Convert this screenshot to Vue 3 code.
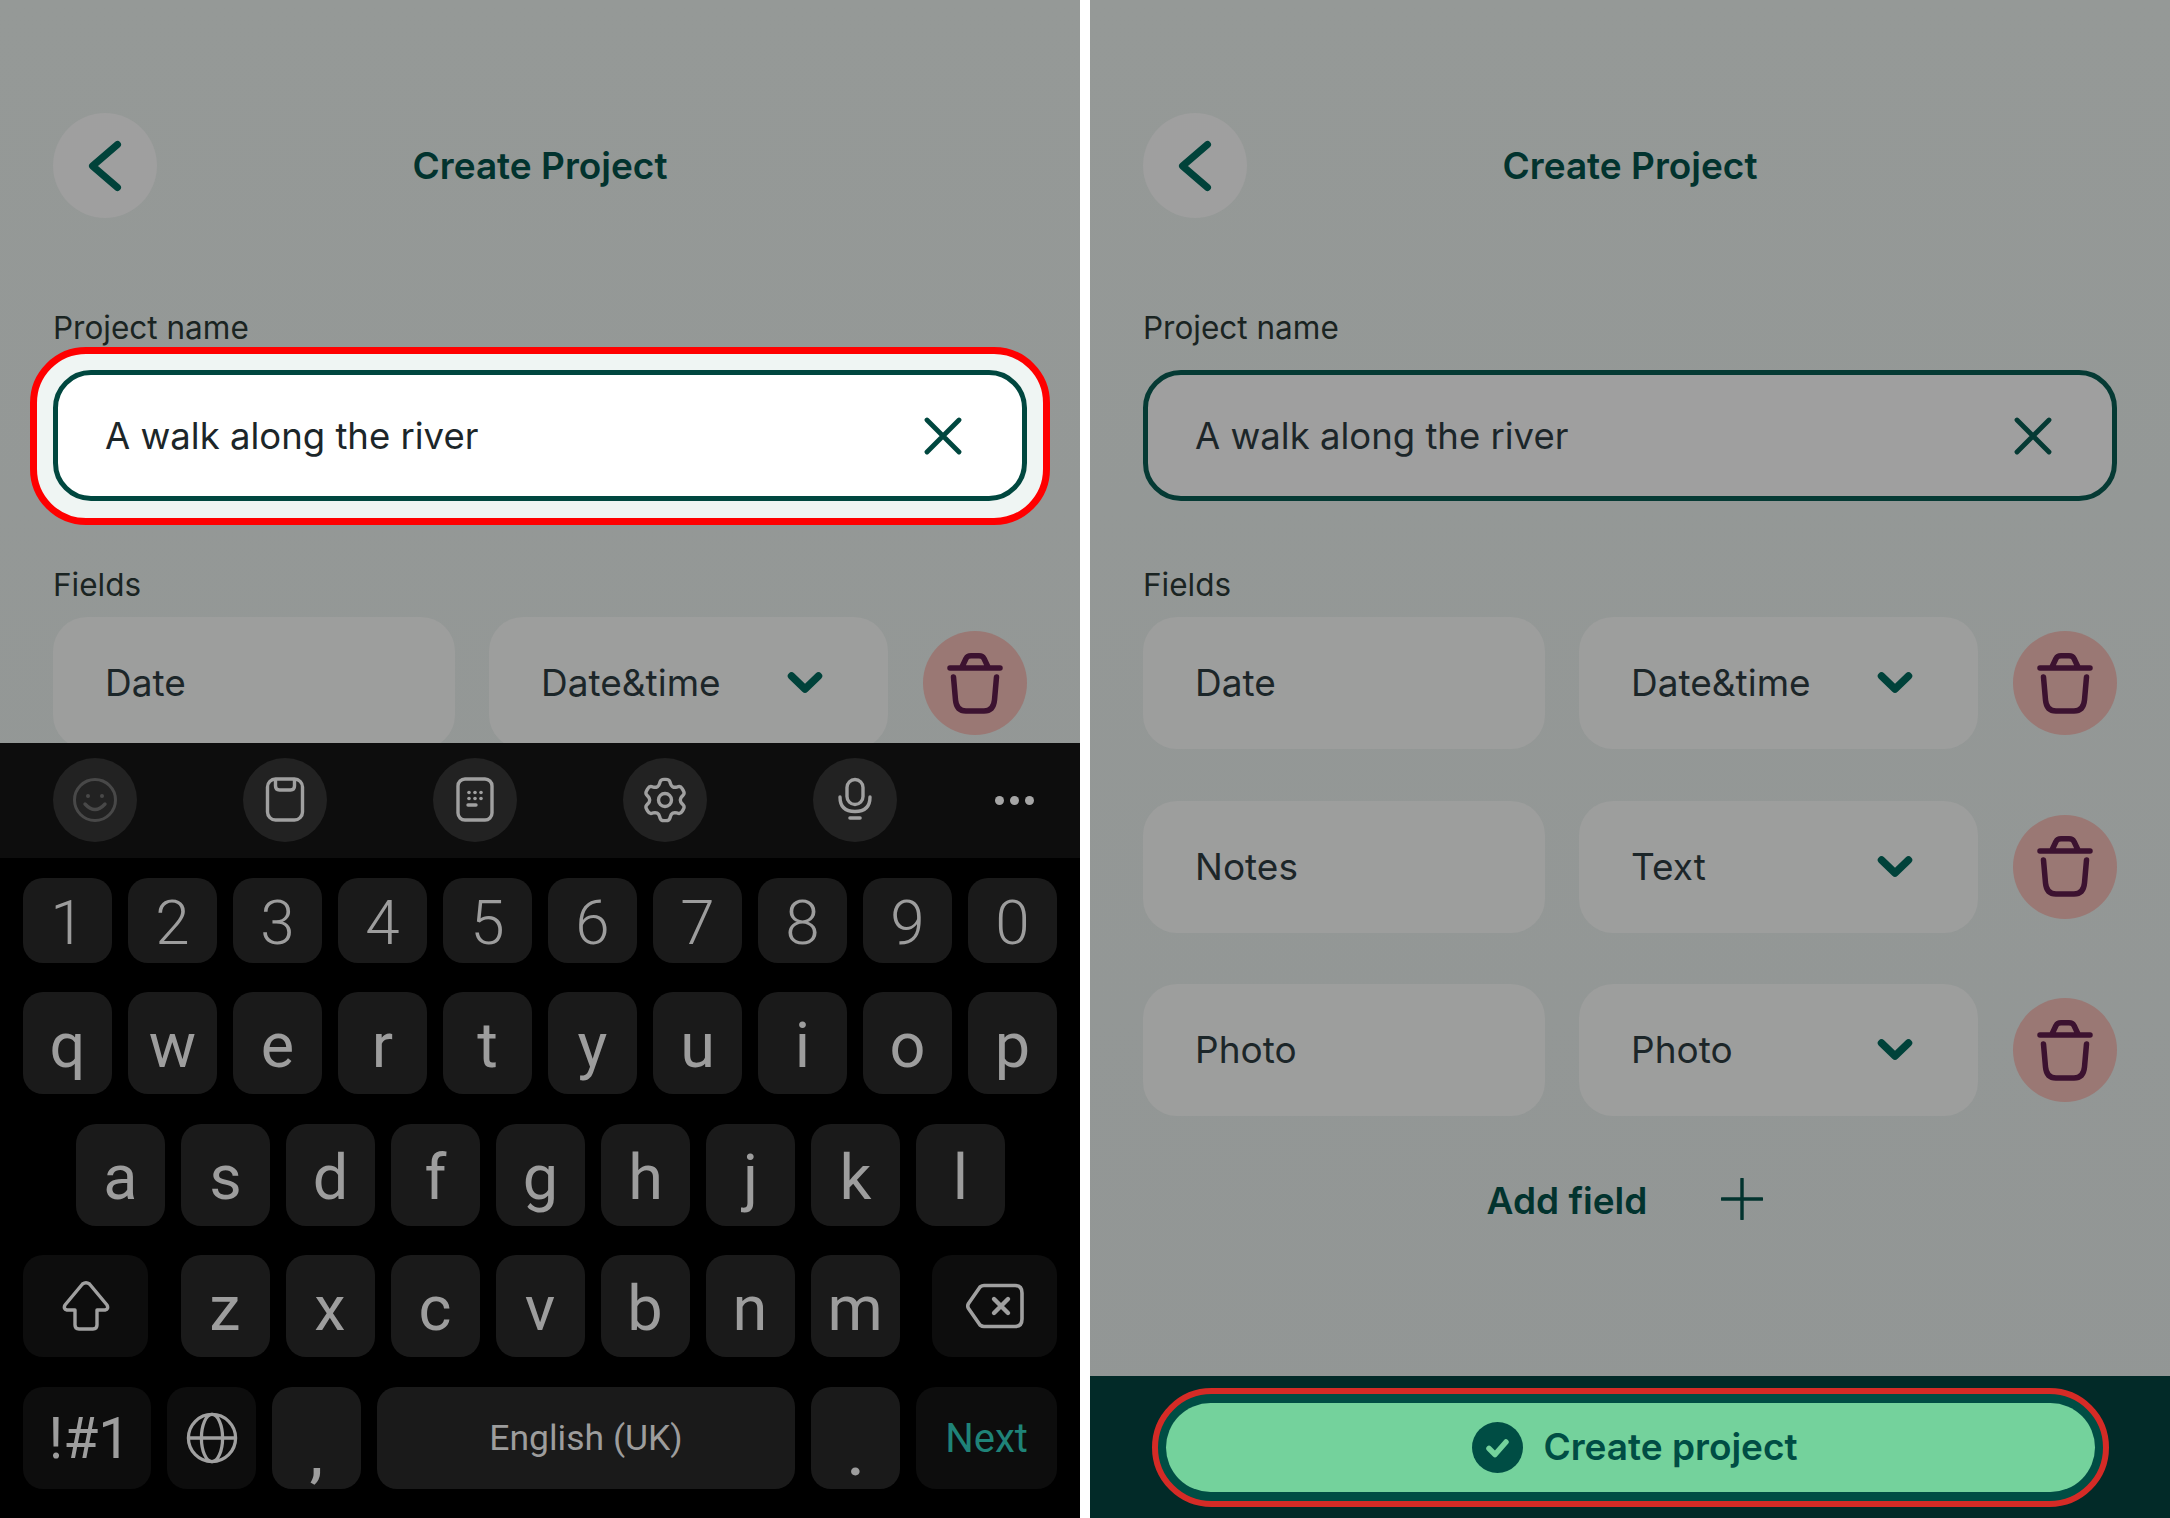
<script setup>
const fieldRows = [
  { name: 'Date', type: 'Date&time' },
  { name: 'Notes', type: 'Text' },
  { name: 'Photo', type: 'Photo' }
]
const digits = '1234567890'.split('')
const row1 = 'qwertyuiop'.split('')
const row2 = 'asdfghjkl'.split('')
const row3 = 'zxcvbnm'.split('')

// six-toothed gear outline with softened corners
function gearPath() {
  const cx = 22, cy = 24, pts = []
  for (let i = 0; i < 6; i++) {
    const a = -Math.PI / 2 + (i * Math.PI) / 3
    const add = (off, r) => pts.push([cx + r * Math.cos(a + off), cy + r * Math.sin(a + off)])
    add(-0.4, 15.5)
    add(-0.2, 21)
    add(0.2, 21)
    add(0.4, 15.5)
  }
  let d = ''
  pts.forEach((p, i) => {
    const prev = pts[(i + pts.length - 1) % pts.length]
    const next = pts[(i + 1) % pts.length]
    const t = 0.38
    const a = [p[0] + (prev[0] - p[0]) * t, p[1] + (prev[1] - p[1]) * t]
    const b = [p[0] + (next[0] - p[0]) * t, p[1] + (next[1] - p[1]) * t]
    d += `${i ? 'L' : 'M'}${a[0].toFixed(2)} ${a[1].toFixed(2)} Q${p[0].toFixed(2)} ${p[1].toFixed(2)} ${b[0].toFixed(2)} ${b[1].toFixed(2)} `
  })
  return d + 'Z'
}
const gear = gearPath()
</script>

<template>
  <div class="page">
    <!-- LEFT PANEL -->
    <section class="panel">
      <header class="head">
        <button class="back">
          <svg viewBox="0 0 104 105" width="104" height="105"><path d="M64.500 31.500 L39.500 53 L64.500 74.500" fill="none" stroke="#00423a" stroke-width="7" stroke-linecap="round" stroke-linejoin="round"/></svg>
        </button>
        <h1 class="title">Create Project</h1>
      </header>
      <label class="lbl first">Project name</label>
      <div class="focus-ring">
        <div class="input white">
          <span>A walk along the river</span>
          <svg class="x" viewBox="0 0 38 38" width="38" height="38"><path d="M3 3 L35 35 M35 3 L3 35" fill="none" stroke="#00473f" stroke-width="4.800" stroke-linecap="round"/></svg>
        </div>
      </div>
      <label class="lbl second-l">Fields</label>
      <div class="clip">
        <div class="frow">
          <div class="fbox name"><span>Date</span></div>
          <div class="fbox type"><span>Date&amp;time</span>
            <svg class="chev" viewBox="0 0 36 24" width="36" height="24"><path d="M4.500 5 L18 18 L31.500 5" fill="none" stroke="#00423a" stroke-width="7.500" stroke-linecap="round" stroke-linejoin="round"/></svg>
          </div>
          <div class="trash">
            <svg viewBox="0 0 56 61" width="56" height="61"><path d="M3 15 H53 M15 14 L19 5.500 Q20.500 2.800 24 2.800 H32 Q35.500 2.800 37 5.500 L41 14 M6.500 24 L8.500 47 Q9.500 58 19 58 H37 Q46.500 58 47.500 47 L49.500 24" fill="none" stroke="#3c1230" stroke-width="5.500" stroke-linecap="round" stroke-linejoin="round"/></svg>
          </div>
        </div>
      </div>

      <div class="kb">
        <div class="tools">
          <span class="tool">
            <svg viewBox="0 0 44 44" width="44" height="44" fill="none" stroke="#484848" stroke-width="3"><circle cx="22" cy="22" r="20.500"/><circle cx="15" cy="18" r="2" fill="#484848" stroke="none"/><circle cx="29" cy="18" r="2" fill="#484848" stroke="none"/><path d="M12 26 Q22 37 32 26" stroke-width="3.400" stroke-linecap="round"/></svg>
          </span>
          <span class="tool">
            <svg viewBox="0 0 44 48" width="44" height="48" fill="none" stroke="#a0a0a0" stroke-width="3.400"><rect x="4.500" y="3" width="35" height="41" rx="8"/><path d="M12.500 3 V10 Q12.500 14 16.500 14 H27.500 Q31.500 14 31.500 10 V3"/></svg>
          </span>
          <span class="tool">
            <svg viewBox="0 0 44 48" width="44" height="48" fill="none" stroke="#a0a0a0" stroke-width="3.400"><rect x="5" y="3" width="34" height="41" rx="7"/><g fill="#a0a0a0" stroke="none"><circle cx="16" cy="16.500" r="1.800"/><circle cx="22" cy="16.500" r="1.800"/><circle cx="28" cy="16.500" r="1.800"/><circle cx="16" cy="22.500" r="1.800"/><circle cx="22" cy="22.500" r="1.800"/><circle cx="28" cy="22.500" r="1.800"/></g><path d="M15 29 H23" stroke-width="3.400" stroke-linecap="round"/></svg>
          </span>
          <span class="tool">
            <svg viewBox="0 0 44 48" width="44" height="48" fill="none" stroke="#a0a0a0" stroke-width="3.400" stroke-linejoin="round"><path :d="gear"/><circle cx="22" cy="24" r="6.500"/></svg>
          </span>
          <span class="tool">
            <svg viewBox="0 0 36 48" width="36" height="48" fill="none" stroke="#a0a0a0" stroke-width="3.400" stroke-linecap="round"><rect x="10" y="3.500" width="16" height="25" rx="8"/><path d="M3 21 Q3 35.500 18 35.500 Q33 35.500 33 21"/><path d="M13 42 H23" stroke-width="3.600"/></svg>
          </span>
          <span class="more"><i></i><i></i><i></i></span>
        </div>
        <div class="keys">
          <div class="krow num"><span v-for="k in digits" :key="k" class="key">{{ k }}</span></div>
          <div class="krow tall"><span v-for="k in row1" :key="k" class="key">{{ k }}</span></div>
          <div class="krow tall inset"><span v-for="k in row2" :key="k" class="key">{{ k }}</span></div>
          <div class="krow tall spread">
            <span class="key fn shift">
              <svg viewBox="0 0 50 52" width="50" height="52" fill="none" stroke="#a0a0a0" stroke-width="3.400" stroke-linejoin="round"><path d="M21.500 4 Q25 1.500 28.500 4 L46 25 Q48 29 44 30 H36 V45 Q36 49 32 49 H18 Q14 49 14 45 V30 H6 Q2 29 4 25 Z"/></svg>
            </span>
            <div class="mid"><span v-for="k in row3" :key="k" class="key">{{ k }}</span></div>
            <span class="key fn shift">
              <svg viewBox="0 0 60 46" width="60" height="46" fill="none" stroke="#a0a0a0" stroke-width="3.600" stroke-linejoin="round"><path d="M15 4 Q17 2.500 19 2.500 H50 Q57 2.500 57 10 V36 Q57 43.500 50 43.500 H19 Q17 43.500 15 42 L3.500 25.500 Q2 23 3.500 20.500 Z"/><path d="M29 16 L43 30 M43 16 L29 30" stroke-width="4.400" stroke-linecap="round"/></svg>
            </span>
          </div>
          <div class="krow tall bottom">
            <span class="key fn sym">!#1</span>
            <span class="key fn globe">
              <svg viewBox="0 0 54 54" width="52" height="52" fill="none" stroke="#a0a0a0" stroke-width="3.400"><circle cx="27" cy="27" r="24.500"/><ellipse cx="27" cy="27" rx="11" ry="24.500"/><path d="M3 27 H51"/></svg>
            </span>
            <span class="key low">,</span>
            <span class="key space">English (UK)</span>
            <span class="key low">.</span>
            <span class="key fn next">Next</span>
          </div>
        </div>
      </div>
    </section>

    <!-- RIGHT PANEL -->
    <section class="panel">
      <header class="head">
        <button class="back">
          <svg viewBox="0 0 104 105" width="104" height="105"><path d="M64.500 31.500 L39.500 53 L64.500 74.500" fill="none" stroke="#00423a" stroke-width="7" stroke-linecap="round" stroke-linejoin="round"/></svg>
        </button>
        <h1 class="title">Create Project</h1>
      </header>
      <label class="lbl first">Project name</label>
      <div class="no-ring">
        <div class="input">
          <span>A walk along the river</span>
          <svg class="x" viewBox="0 0 38 38" width="38" height="38"><path d="M3 3 L35 35 M35 3 L3 35" fill="none" stroke="#053a34" stroke-width="4.800" stroke-linecap="round"/></svg>
        </div>
      </div>
      <label class="lbl second-r">Fields</label>
      <div class="rows">
        <div v-for="r in fieldRows" :key="r.name" class="frow">
          <div class="fbox name"><span>{{ r.name }}</span></div>
          <div class="fbox type"><span>{{ r.type }}</span>
            <svg class="chev" viewBox="0 0 36 24" width="36" height="24"><path d="M4.500 5 L18 18 L31.500 5" fill="none" stroke="#00423a" stroke-width="7.500" stroke-linecap="round" stroke-linejoin="round"/></svg>
          </div>
          <div class="trash">
            <svg viewBox="0 0 56 61" width="56" height="61"><path d="M3 15 H53 M15 14 L19 5.500 Q20.500 2.800 24 2.800 H32 Q35.500 2.800 37 5.500 L41 14 M6.500 24 L8.500 47 Q9.500 58 19 58 H37 Q46.500 58 47.500 47 L49.500 24" fill="none" stroke="#3c1230" stroke-width="5.500" stroke-linecap="round" stroke-linejoin="round"/></svg>
          </div>
        </div>
      </div>
      <div class="add">
        <span>Add field</span>
        <svg viewBox="0 0 44 44" width="42" height="42"><path d="M22 1 V43 M1 22 H43" fill="none" stroke="#02332e" stroke-width="3.600" stroke-linecap="round"/></svg>
      </div>
      <footer class="foot">
        <div class="cta-ring">
          <button class="cta">
            <svg viewBox="0 0 51 51" width="51" height="51"><circle cx="25.500" cy="25.500" r="25.500" fill="#004d44"/><path d="M17 26.500 L23 32.500 L34 20" fill="none" stroke="#74d29c" stroke-width="5.500" stroke-linecap="round" stroke-linejoin="round"/></svg>
            <span>Create project</span>
          </button>
        </div>
      </footer>
    </section>
  </div>
</template>

<style>
html, body { margin: 0; background: #fff; }
</style>

<style scoped>
.page {
  display: flex;
  gap: 10px;
  width: 2170px;
  height: 1518px;
  overflow: hidden;
  font-family: Inter, "Liberation Sans", sans-serif;
}
.panel {
  position: relative;
  width: 1080px;
  height: 1518px;
  display: flex;
  flex-direction: column;
  background: linear-gradient(#959997, #929695);
  overflow: hidden;
}
.head {
  display: flex;
  align-items: center;
  height: 105px;
  margin: 113px 53px 0;
}
.back {
  width: 104px;
  height: 105px;
  padding: 0;
  border: 0;
  border-radius: 50%;
  background: #9f9f9f;
  display: block;
  flex: none;
}
.back svg { display: block; }
.title {
  flex: 1;
  margin: 0 104px 0 0;
  text-align: center;
  font-size: 37px;
  font-weight: 600;
  color: #02332e;
}
.lbl {
  display: block;
  margin: 0 53px;
  font-size: 31.5px;
  line-height: 40px;
  color: #1a2422;
}
.lbl.first { margin-top: 90px; }
.lbl.second-l { margin-top: 40px; }
.lbl.second-r { margin-top: 64px; }
.focus-ring {
  box-sizing: border-box;
  margin: -1px 30px 0;
  height: 178px;
  border: 7px solid #ff0000;
  border-radius: 56px;
  background: #eff5f3;
  padding: 16px;
}
.no-ring { margin: 22px 53px 0; }
.input {
  box-sizing: border-box;
  height: 131px;
  border: 5px solid #053a34;
  border-radius: 38px;
  display: flex;
  align-items: center;
  justify-content: space-between;
  padding: 0 60px 0 47px;
  font-size: 36.5px;
  color: #1c2629;
  background: #9f9f9f;
}
.input.white { background: #fff; border-color: #00473f; }
.input .x { display: block; }
.clip { height: 126px; margin: 12px 53px 0; overflow: hidden; }
.rows {
  margin: 12px 53px 0;
  display: flex;
  flex-direction: column;
  gap: 51.500px;
}
.frow {
  display: flex;
  align-items: center;
  height: 132px;
}
.fbox {
  box-sizing: border-box;
  height: 132px;
  border-radius: 34px;
  background: #9d9e9d;
  display: flex;
  align-items: center;
  padding-left: 52px;
  font-size: 37px;
  color: #1c2629;
}
.fbox span { padding-bottom: 1px; }
.name { width: 402px; }
.type {
  width: 399px;
  margin-left: 34px;
  justify-content: space-between;
  padding-right: 65px;
}
.chev { display: block; }
.trash {
  width: 104px;
  height: 104px;
  margin-left: 35px;
  border-radius: 50%;
  background: #9a7874;
  display: flex;
  align-items: center;
  justify-content: center;
}
.trash svg { display: block; }

/* Keyboard */
.kb {
  position: absolute;
  left: 0;
  right: 0;
  top: 743px;
  bottom: 0;
  background: #000;
  font-family: Roboto, "Liberation Sans", sans-serif;
  color: #9d9d9d;
}
.tools {
  box-sizing: border-box;
  height: 115px;
  background: #0d0d0d;
  padding: 15px 0 0 53px;
  display: flex;
  gap: 106px;
}
.tool {
  flex: none;
  width: 84px;
  height: 84px;
  border-radius: 50%;
  background: #222;
  display: flex;
  align-items: center;
  justify-content: center;
}
.tool svg { display: block; }
.more {
  display: flex;
  gap: 6px;
  height: 84px;
  align-items: center;
  position: absolute;
  left: 995px;
}
.more i {
  width: 9px;
  height: 9px;
  border-radius: 50%;
  background: #a5a5a5;
}
.keys {
  padding: 20px 23px 0;
  display: flex;
  flex-direction: column;
}
.krow {
  display: flex;
  gap: 16px;
  height: 102px;
  margin-top: 29px;
}
.krow.num { height: 85px; margin-top: 0; }
.krow.inset { margin: 30px 53px 0; }
.krow.spread { justify-content: space-between; gap: 0; }
.krow.bottom { margin-top: 30px; }
.mid { display: flex; gap: 16px; }
.key {
  box-sizing: border-box;
  flex: 0 0 89px;
  width: 89px;
  border-radius: 20px;
  background: #1a1a1a;
  display: flex;
  align-items: center;
  justify-content: center;
  font-size: 63px;
  font-weight: 380;
  line-height: 1;
  padding-top: 4px;
}
.num .key { font-size: 62px; font-weight: 330; padding-top: 5px; }
.key.fn { background: #0d0d0d; padding-top: 0; }
.sym.key { font-size: 57px; font-weight: 380; padding-left: 5px; }
.shift { flex: 0 0 125px; width: 125px; }
.sym { flex: 0 0 128px; width: 128px; }
.globe { flex: 0 0 89px; }
.key.low { align-items: flex-end; padding: 0 0 4px; font-size: 62px; font-weight: 500; }
.key.space { flex: 0 0 418px; width: 418px; font-size: 35.5px; font-weight: 400; padding-top: 2px; }
.key.next { flex: 0 0 141px; width: 141px; font-size: 40px; font-weight: 400; padding-top: 2px; color: #1f8378; }

/* Right panel bottom */
.add {
  display: flex;
  align-items: center;
  justify-content: center;
  gap: 74px;
  margin-top: 61px;
  padding-right: 10px;
  height: 46px;
  font-size: 37px;
  font-weight: 600;
  color: #02332e;
}
.add svg { display: block; margin-top: -2px; }
.foot {
  position: absolute;
  left: 0;
  right: 0;
  bottom: 0;
  height: 142px;
  background: #022a28;
  padding-top: 12px;
  box-sizing: border-box;
}
.cta-ring {
  box-sizing: border-box;
  width: 957px;
  height: 119px;
  margin-left: 62px;
  border: 6px solid #d52b26;
  border-radius: 60px;
  background: #004d44;
  padding: 9px 8px;
}
.cta {
  width: 100%;
  height: 89px;
  padding: 0 0 0 9px;
  border: 0;
  border-radius: 45px;
  background: #74d29c;
  display: flex;
  align-items: center;
  justify-content: center;
  gap: 20px;
  font-family: inherit;
  font-size: 37px;
  font-weight: 600;
  color: #004d44;
}
.cta svg { display: block; }
.cta span { padding-bottom: 2px; }
</style>
